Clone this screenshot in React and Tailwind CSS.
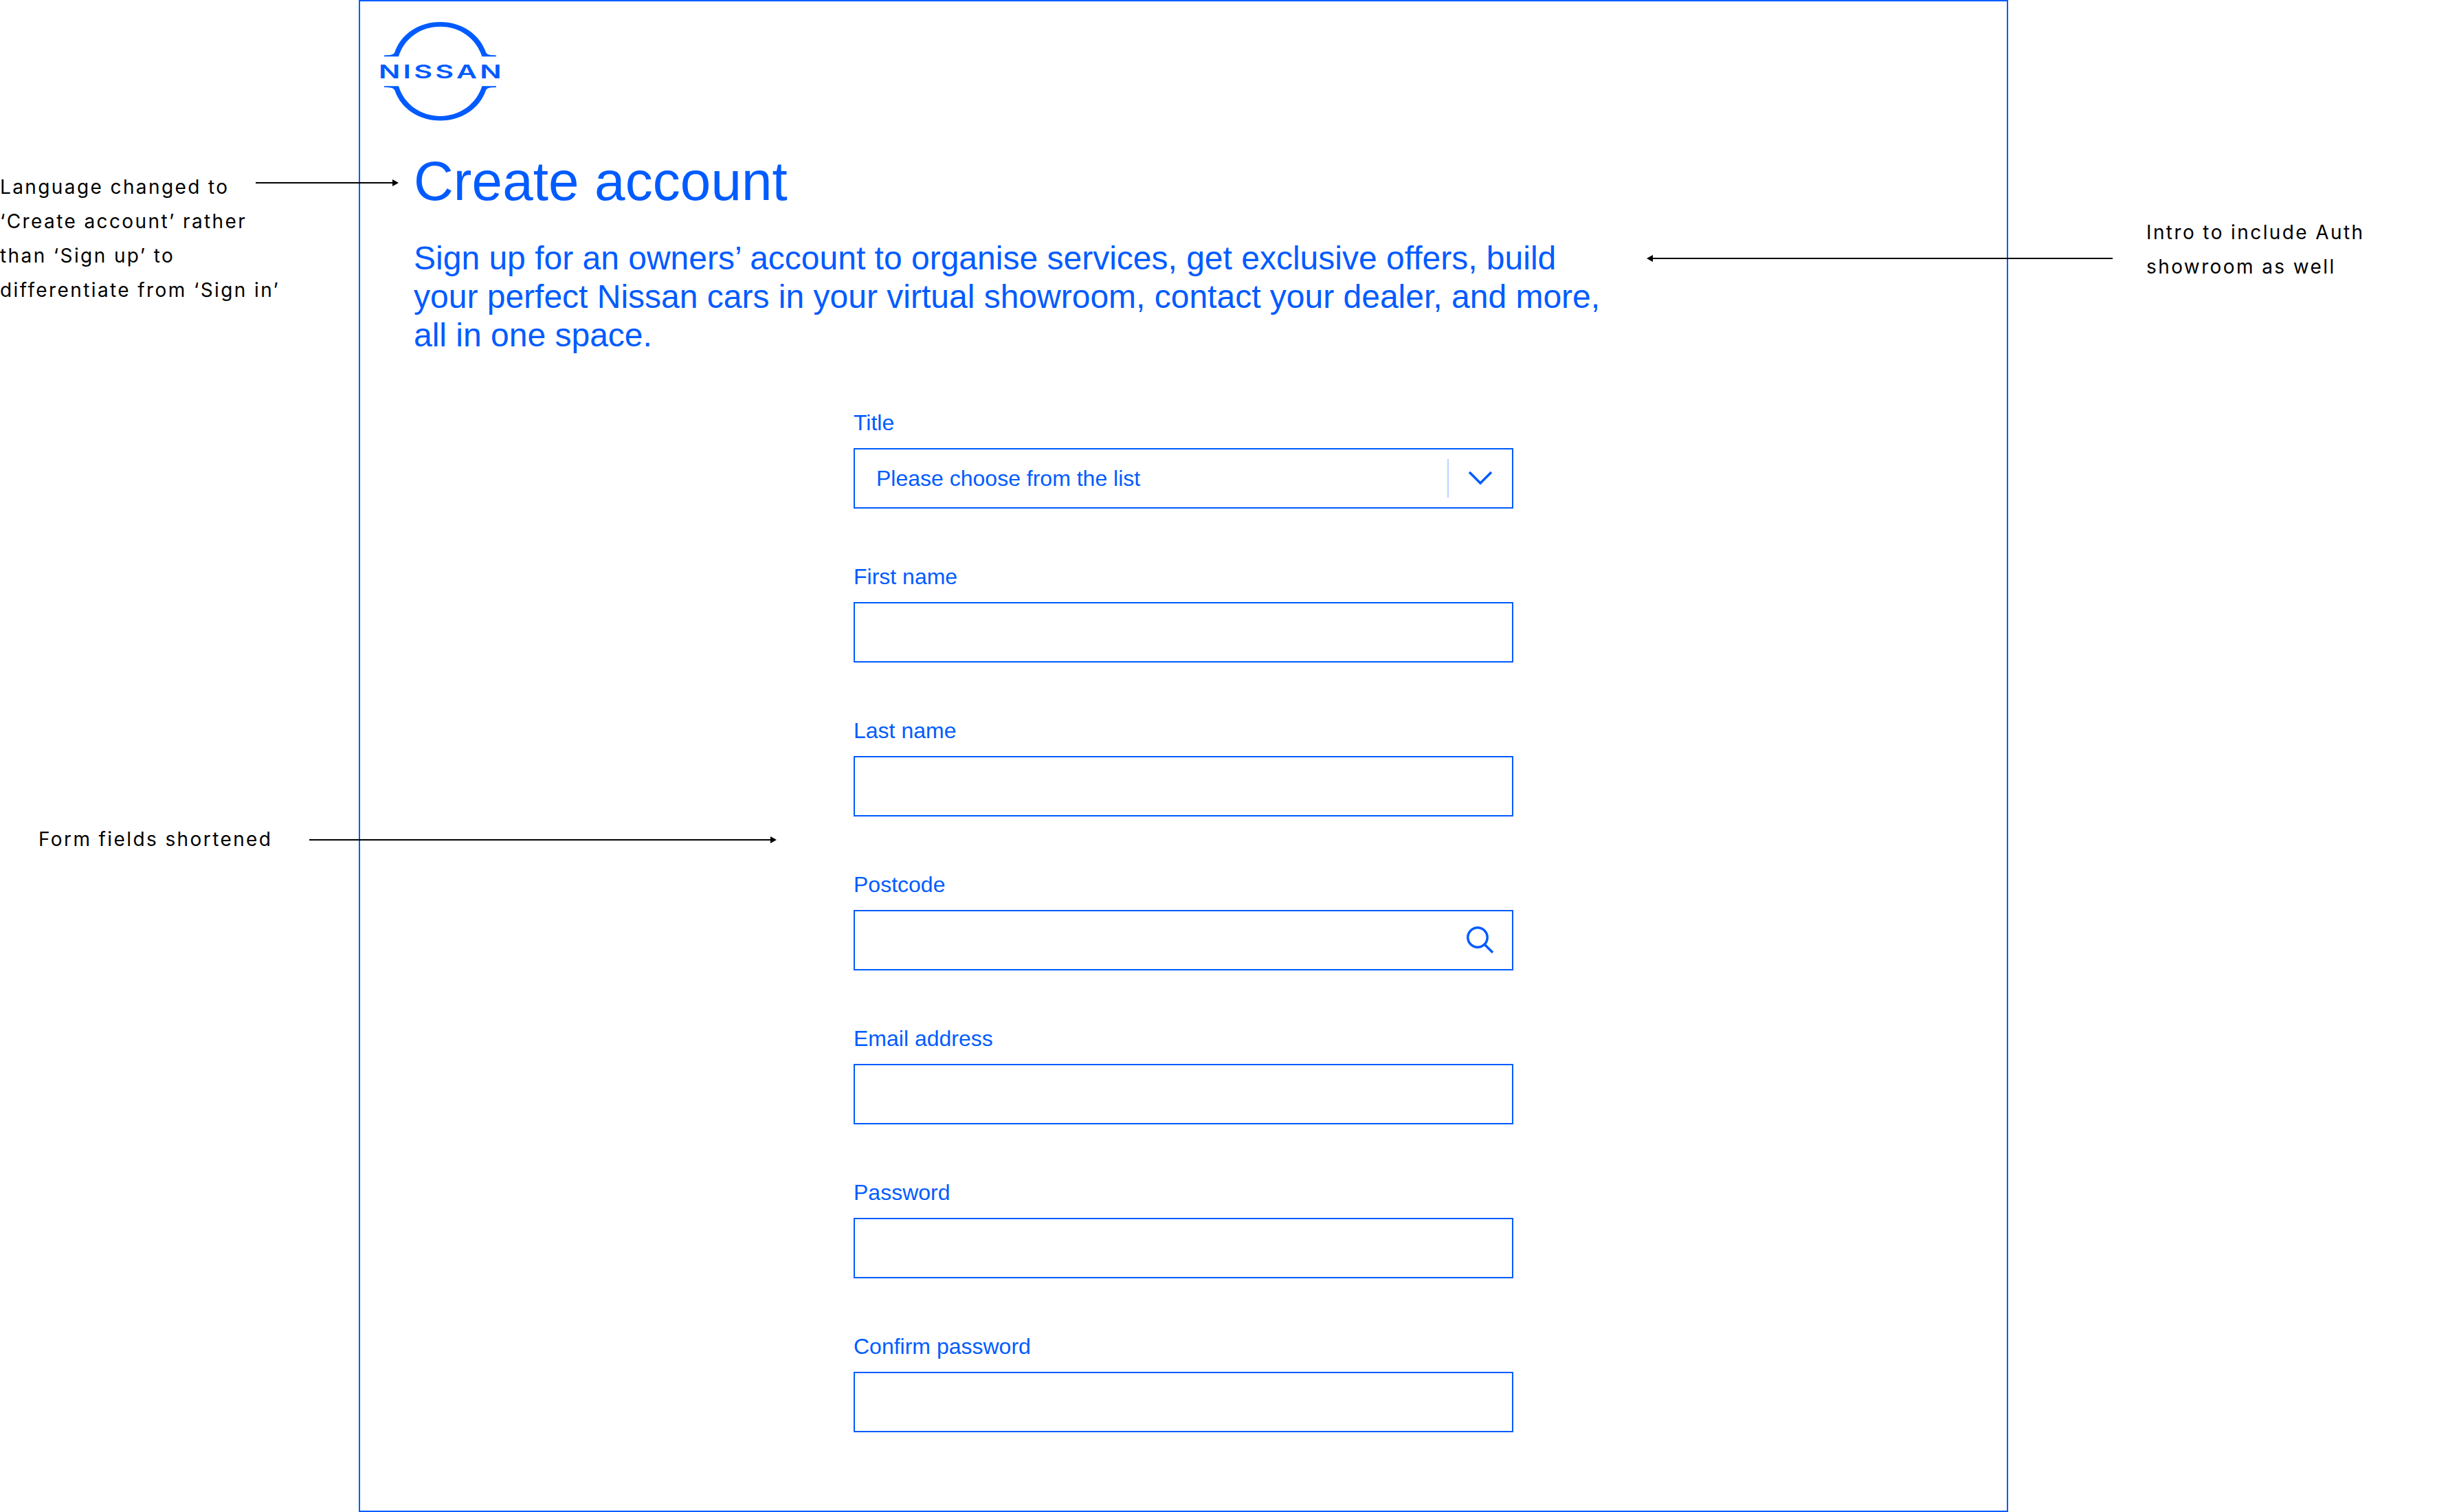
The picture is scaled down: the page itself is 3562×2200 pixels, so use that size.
import React from 'react';

const Logo = () => (
  <svg viewBox="0 0 180 150" className="w-[180px] h-[150px] block overflow-visible">
    <path className="fill-[#005bff]" d="M7 52.3 L28 52.3 C36 26 60 8.7 88.7 8.7 C117 8.7 141 26 149.4 52.3 L170 52.3 L170 50.5 C160 50 157 50 155 46 C146 20 120 2 88.7 2 C57 2 31 20 22.4 46 C20.5 50 17 50 7 50.5 Z" />
    <path className="fill-[#005bff]" transform="matrix(1 0 0 -1 0 147.6)" d="M7 52.3 L28 52.3 C36 26 60 8.7 88.7 8.7 C117 8.7 141 26 149.4 52.3 L170 52.3 L170 50.5 C160 50 157 50 155 46 C146 20 120 2 88.7 2 C57 2 31 20 22.4 46 C20.5 50 17 50 7 50.5 Z" />
    <text transform="translate(-1 84) scale(1.5 1)" textLength="119" lengthAdjust="spacing" className="fill-[#005bff] text-[27.5px] font-semibold font-['Inter',sans-serif]">NISSAN</text>
  </svg>
);

// the arrows run across the frame, so they sit over the page
const ArrowRight = ({ className }) => (
  <div className={`absolute flex items-center h-[12px] ${className}`}>
    <div className="flex-1 h-[2px] bg-black" />
    <svg width="9" height="12" className="block shrink-0"><path d="M0 1 L9 6 L0 11 Z" fill="#000" /></svg>
  </div>
);

const ArrowLeft = ({ className }) => (
  <div className={`absolute flex items-center h-[12px] ${className}`}>
    <svg width="9" height="12" className="block shrink-0"><path d="M9 1 L0 6 L9 11 Z" fill="#000" /></svg>
    <div className="flex-1 h-[2px] bg-black" />
  </div>
);

const Note = ({ lines, className = '' }) => (
  <div className={`text-[28px] leading-[50px] tracking-[2.4px] text-black font-['Inter',sans-serif] whitespace-nowrap ${className}`}>
    {lines.map((line) => (
      <div key={line}>{line}</div>
    ))}
  </div>
);

const Field = ({ label, children }) => (
  <div className="flex flex-col">
    <label className="text-[32px] leading-[36px] mb-[19px]">{label}</label>
    <div className="h-[88px] border-2 border-[#005bff] flex items-center">
      {children}
    </div>
  </div>
);

const App = () => {
  return (
    <div className="relative flex w-[3562px] h-[2200px] bg-white overflow-hidden font-['Liberation_Sans',Arial,sans-serif]">
      <div className="w-[522px] shrink-0 flex flex-col pt-[247px]">
        <Note lines={['Language changed to', '‘Create account’ rather', 'than ‘Sign up’ to', 'differentiate from ‘Sign in’']} />
        <Note lines={['Form fields shortened']} className="ml-[56px] mt-[749px]" />
      </div>

      <div className="w-[2400px] h-[2200px] shrink-0 border-2 border-[#005bff] pt-[28px] pl-[28px] text-[#005bff]">
        <Logo />
        <div className="pl-[50px]">
          <h1 className="text-[80px] leading-[92px] tracking-[0.1px] mt-[38px]">Create account</h1>
          <p className="w-[1760px] text-[48px] leading-[56px] mt-[38px]">
            Sign up for an owners’ account to organise services, get exclusive offers, build your perfect Nissan cars in your virtual showroom, contact your dealer, and more, all in one space.
          </p>
        </div>

        <form className="w-[960px] ml-[690px] mt-[81px] flex flex-col gap-[81px]">
          <Field label="Title">
            <span className="flex-1 pl-[31px] text-[32px]">Please choose from the list</span>
            <span className="w-[2px] h-[56px] bg-[#b9d3ff]" />
            <svg viewBox="0 0 36 22" className="w-[36px] h-[22px] mx-[28px] shrink-0 fill-none stroke-[#005bff] stroke-[3.5px]">
              <path d="M2 2 L18 18 L34 2" />
            </svg>
          </Field>
          <Field label="First name"><input className="w-full h-full outline-none" /></Field>
          <Field label="Last name"><input className="w-full h-full outline-none" /></Field>
          <Field label="Postcode">
            <input className="flex-1 h-full outline-none" />
            <svg viewBox="0 0 48 48" className="w-[48px] h-[48px] mr-[24px] shrink-0 fill-none stroke-[#005bff] stroke-[3.5px]">
              <circle cx="22" cy="20" r="14.2" />
              <path d="M32 30 L44 42" />
            </svg>
          </Field>
          <Field label="Email address"><input className="w-full h-full outline-none" /></Field>
          <Field label="Password"><input className="w-full h-full outline-none" /></Field>
          <Field label="Confirm password"><input className="w-full h-full outline-none" /></Field>
        </form>
      </div>

      <div className="pl-[201px] pt-[313px]">
        <Note lines={['Intro to include Auth', 'showroom as well']} />
      </div>

      <ArrowRight className="left-[372px] top-[260px] w-[208px]" />
      <ArrowRight className="left-[450px] top-[1216px] w-[680px]" />
      <ArrowLeft className="left-[2396px] top-[370px] w-[678px]" />
    </div>
  );
};

export default App;
